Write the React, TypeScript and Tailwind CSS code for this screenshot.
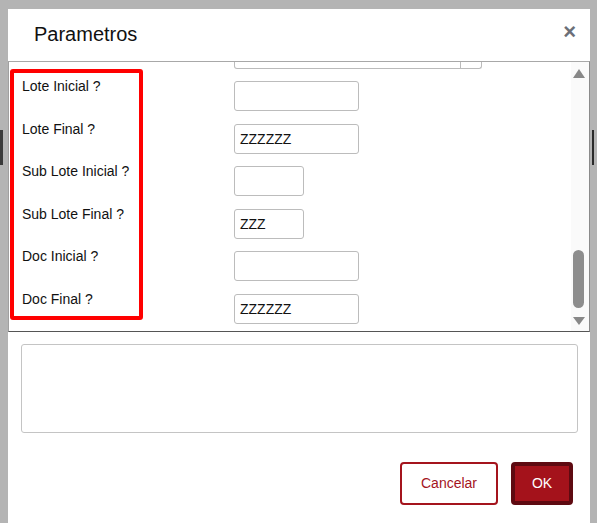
import React from 'react';

const rows = [
  { label: 'Lote Inicial ?', value: '', w: 'w-[125px]' },
  { label: 'Lote Final ?', value: 'ZZZZZZ', w: 'w-[125px]' },
  { label: 'Sub Lote Inicial ?', value: '', w: 'w-[70px]' },
  { label: 'Sub Lote Final ?', value: 'ZZZ', w: 'w-[70px]' },
  { label: 'Doc Inicial ?', value: '', w: 'w-[125px]' },
  { label: 'Doc Final ?', value: 'ZZZZZZ', w: 'w-[125px]' },
];

const gaps = ['mt-[12px]', 'mt-[13px]', 'mt-[12px]', 'mt-[13px]', 'mt-[12px]', 'mt-[13px]'];

const App: React.FC = () => {
  return (
    <div className="relative w-[597px] h-[523px] overflow-hidden bg-[#b4b4b4] pt-[9px] pl-[8px] pr-[7px] font-['Liberation_Sans',Arial,sans-serif]">
      {/* bits of the page behind the overlay */}
      <div className="absolute left-0 top-[130px] w-[3px] h-[35px] bg-[#3a3a3a]" />
      <div className="absolute right-[3px] top-[130px] w-[2px] h-[35px] bg-[#2a2a2a]" />

      <div className="flex flex-col h-full bg-white">
        {/* header */}
        <div className="flex items-center justify-between h-[52px] pl-[26px] pr-[14px]">
          <h1 className="text-[20px] text-[#111] mt-[-3px]">Parametros</h1>
          <span className="text-[22px] font-bold text-[#6b6f78] leading-none mt-[-7px]">×</span>
        </div>

        {/* scroll body */}
        <div className="flex h-[271px] border-t border-l border-r border-b border-t-[#a8a8a8] border-l-[#a0a0a0] border-r-[#8a8a8a] border-b-[#555]">
          <div className="flex-1 flex flex-col">
            <div className="ml-[225px] w-[248px] h-[7px] border border-t-0 border-[#bbb] rounded-b-[3px] flex justify-end">
              <div className="w-[21px] h-full border-l border-[#bbb]" />
            </div>
            <div className="flex">
              <div className="ml-[1px] w-[133px] h-[251px] border-4 border-[#ff0000] rounded-[3px] pl-[8px] pt-[5px] text-[14px] text-[#111]">
                {rows.map((r) => (
                  <div key={r.label} className="h-[42.5px] leading-[16px] whitespace-nowrap">{r.label}</div>
                ))}
              </div>
              <div className="ml-[91px] flex flex-col">
                {rows.map((r, i) => (
                  <div
                    key={r.label}
                    className={`${gaps[i]} ${r.w} h-[30px] border border-[#bcbcbc] rounded-[3px] pl-[5px] flex items-center text-[14px] text-[#111]`}
                  >
                    {r.value}
                  </div>
                ))}
              </div>
            </div>
          </div>

          {/* scrollbar */}
          <div className="w-[18px] bg-[#fafafa] flex flex-col items-center pt-[7px] pb-[6px]">
            <svg width="12" height="9" viewBox="0 0 12 9" className="ml-[-3px]">
              <polygon points="6,0 12,9 0,9" fill="#888" />
            </svg>
            <div className="flex-1" />
            <div className="w-[11px] h-[58px] rounded-full bg-[#8d8d8d] ml-[-3px]" />
            <svg width="12" height="8" viewBox="0 0 12 8" className="ml-[-3px] mt-[9px]">
              <polygon points="0,0 12,0 6,8" fill="#888" />
            </svg>
          </div>
        </div>

        {/* text area */}
        <div className="mt-[12px] ml-[13px] mr-[12px] h-[89px] border border-[#c4c4c4] rounded-[3px]" />

        {/* buttons */}
        <div className="flex justify-end gap-[13px] mt-[29px] pr-[17px]">
          <button className="w-[98px] h-[43px] border-2 border-[#a4141d] rounded-[4px] text-[14px] text-[#a4141d] bg-white">
            Cancelar
          </button>
          <button className="w-[62px] h-[43px] border-[4px] border-[#5e0a11] rounded-[4px] text-[14px] text-white bg-[#a4121b]">
            OK
          </button>
        </div>
      </div>
    </div>
  );
};

export default App;
